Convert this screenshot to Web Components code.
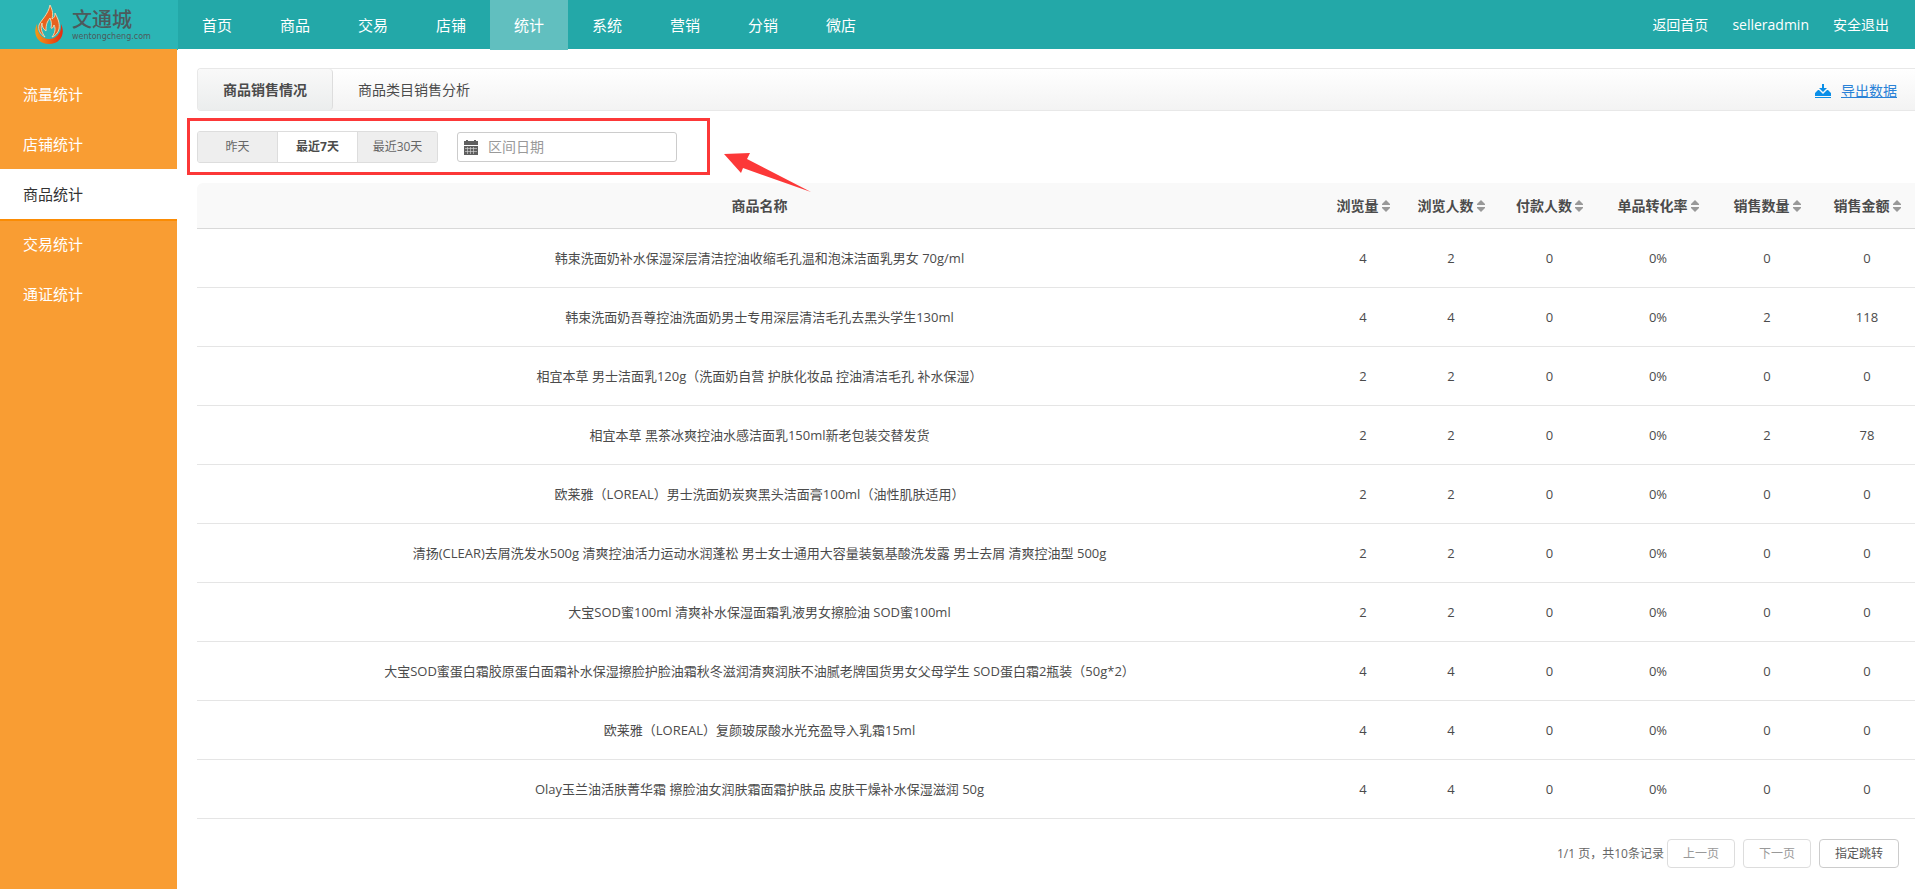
<!DOCTYPE html>
<html lang="zh-CN">
<head>
<meta charset="utf-8">
<title>商品统计</title>
<style>
  body { margin: 0; background: #fff; color: #4b4b4b; font: 14px/20px "Open Sans", "Noto Sans CJK SC", sans-serif; }
</style>
</head>
<body>
<seller-app></seller-app>
<script>
const define = (name, html, setup) => customElements.define(name, class extends HTMLElement {
  constructor() {
    super();
    const t = document.createElement('template');
    t.innerHTML = html;
    this.attachShadow({ mode: 'open' }).append(t.content.cloneNode(true));
    if (setup) setup.call(this, this.shadowRoot);
  }
});

define('brand-logo', `
<style>
  :host { display: flex; align-items: center; gap: 8px; box-sizing: border-box; width: 178px; height: 50px; padding-left: 34px; background: #2bb5b5; color: #4d5a5c; }
  svg { display: block; width: 30px; height: 40px; flex: none; }
  .words { display: flex; flex-direction: column; }
  b { font-weight: 500; font-size: 20px; line-height: 24px; }
  small { font: 8px/10px "DejaVu Sans", sans-serif; white-space: nowrap; }
</style>
<svg viewBox="0 0 30 40" aria-hidden="true">
  <defs><linearGradient id="g" x1="0" x2="1"><stop offset="0" stop-color="#f39a16"/><stop offset="1" stop-color="#e52a12"/></linearGradient></defs>
  <path d="M3 19C-2 29 4 39 15 39S32 29 27 19C28 28 22 34 15 34S3 28 3 19Z" fill="url(#g)"/>
  <path d="M16 0C19 6 19 9 18 14C21 12 21 10 21 8C24 14 26 18 25 24C24 28 21 31 18 32C21 28 22 24 20 20C19 23 18 24 17 23C18 18 17 16 16 13C13 17 12 19 12 26C9 24 8 21 8 18C6 23 8 28 11 32C6 29 4 25 5 20C7 15 14 10 16 0Z" fill="#e8621d" stroke="#f6dcb4" stroke-width=".9"/>
</svg>
<span class="words"><b>文通城</b><small>wentongcheng.com</small></span>`);

define('top-bar', `
<style>
  :host { display: flex; height: 49px; background: #23a8a8; font-size: 15px; }
  nav { display: flex; }
  .main { flex: 1; }
  .main a { width: 78px; height: 50px; line-height: 50px; text-align: center; }
  .main a[aria-current] { background: #61bfbf; }
  .user { gap: 24px; padding-right: 26px; font-size: 14px; line-height: 50px; }
  a { color: #fff; text-decoration: none; }
</style>
<brand-logo></brand-logo>
<nav class="main" aria-label="主导航"><a href="#">首页</a><a href="#">商品</a><a href="#">交易</a><a href="#">店铺</a><a href="#" aria-current="page">统计</a><a href="#">系统</a><a href="#">营销</a><a href="#">分销</a><a href="#">微店</a></nav>
<nav class="user" aria-label="账户"><a href="#">返回首页</a><a href="#">selleradmin</a><a href="#">安全退出</a></nav>`);

define('side-menu', `
<style>
  :host { display: block; width: 177px; flex: none; padding-top: 20px; box-sizing: border-box; background: #f99d33; font-size: 15px; }
  a { display: block; padding-left: 23px; line-height: 50px; color: #fff; text-decoration: none; }
  a[aria-current] { background: #fff; color: #333; box-shadow: 0 2px #fb8c04; }
</style>
<nav aria-label="统计"><a href="#">流量统计</a><a href="#">店铺统计</a><a href="#" aria-current="page">商品统计</a><a href="#">交易统计</a><a href="#">通证统计</a></nav>`);

define('tab-strip', `
<style>
  :host { display: flex; align-items: stretch; height: 41px; border: 1px solid #e8e8e8; border-right: 0; border-radius: 4px 0 0 4px; background: linear-gradient(#fff, #f3f3f3); line-height: 42px; }
  .tab { padding: 0 25px; color: #4b4b4b; text-decoration: none; }
  .tab[aria-current] { border-right: 1px solid #ddd; border-radius: 4px; background: linear-gradient(#f9f9f9, #ebeded); font-weight: bold; }
  .export { display: flex; align-items: center; gap: 10px; margin-left: auto; padding: 2px 18px 0 0; color: #2a82d7; }
  svg { width: 16px; height: 14px; }
</style>
<a class="tab" href="#" aria-current="page">商品销售情况</a><a class="tab" href="#">商品类目销售分析</a>
<a class="export" href="#"><svg viewBox="0 0 16 14" fill="#0a8fe8" aria-hidden="true"><path d="M7 0h2v4h3L8 8 4 4h3zM0 12V9l3-3h1l4 4 4-4h1l3 3v3zM0 13h16v1H0z"/></svg><u>导出数据</u></a>`);

define('date-filter', `
<style>
  :host { display: flex; align-items: center; gap: 19px; position: relative; padding: 20px 0; }
  .seg { display: flex; border: 1px solid #ddd; border-radius: 3px; overflow: hidden; }
  button { width: 80px; height: 30px; padding: 0; border: 0; border-right: 1px solid #ddd; background: #eee; color: #666; font: inherit; font-size: 12px; }
  button:last-child { border-right: 0; width: 79px; }
  button[aria-pressed=true] { background: #fff; color: #4b4b4b; font-weight: bold; }
  label { display: flex; align-items: center; gap: 10px; box-sizing: border-box; width: 220px; height: 30px; padding-left: 6px; border: 1px solid #ccc; border-radius: 3px; background: #fff; }
  label svg { width: 14px; height: 15px; flex: none; }
  input { flex: 1; min-width: 0; padding: 0; border: 0; outline: 0; background: none; font: inherit; }
  input::placeholder { color: #999; opacity: 1; }
  .mark { position: absolute; left: -10px; top: 7px; width: 517px; height: 51px; border: 3px solid #fc3838; pointer-events: none; }
  .arrow { position: absolute; left: 527px; top: 41px; width: 88px; height: 42px; pointer-events: none; }
</style>
<div class="seg" role="group" aria-label="时间范围"><button>昨天</button><button aria-pressed="true">最近7天</button><button>最近30天</button></div>
<label><svg viewBox="0 0 14 15" aria-hidden="true"><path d="M0 1h2V0h2v1h6V0h2v1h2v4H0zM0 6h14v9H0z" fill="#606060"/><path d="M1 8.500h12M1 11.500h12M3.500 7v7M6.500 7v7M9.500 7v7" stroke="#ddd" stroke-width=".6"/></svg><input type="text" placeholder="区间日期" aria-label="区间日期"></label>
<span class="mark"></span>
<svg class="arrow" viewBox="0 0 88 42" aria-hidden="true"><path d="M0 2 26 1 23 7 87 40 19 16 17 21Z" fill="#fc3838"/></svg>`);

define('sort-button', `
<style>
  :host { display: inline-block; }
  button { display: flex; align-items: center; gap: 3px; padding: 0; border: 0; background: none; color: inherit; font: inherit; }
  svg { width: 8px; height: 12px; }
</style>
<button><slot></slot><svg viewBox="0 0 8 12" fill="#999" aria-hidden="true"><path d="M4 0l4 4v1H0V4zM0 7h8v1l-4 4-4-4z"/></svg></button>`);

const rows = [
  ['韩束洗面奶补水保湿深层清洁控油收缩毛孔温和泡沫洁面乳男女 70g/ml', 4, 2, 0, '0%', 0, 0],
  ['韩束洗面奶吾尊控油洗面奶男士专用深层清洁毛孔去黑头学生130ml', 4, 4, 0, '0%', 2, 118],
  ['相宜本草 男士洁面乳120g（洗面奶自营 护肤化妆品 控油清洁毛孔 补水保湿）', 2, 2, 0, '0%', 0, 0],
  ['相宜本草 黑茶冰爽控油水感洁面乳150ml新老包装交替发货', 2, 2, 0, '0%', 2, 78],
  ['欧莱雅（LOREAL）男士洗面奶炭爽黑头洁面膏100ml（油性肌肤适用）', 2, 2, 0, '0%', 0, 0],
  ['清扬(CLEAR)去屑洗发水500g 清爽控油活力运动水润蓬松 男士女士通用大容量装氨基酸洗发露 男士去屑 清爽控油型 500g', 2, 2, 0, '0%', 0, 0],
  ['大宝SOD蜜100ml 清爽补水保湿面霜乳液男女擦脸油 SOD蜜100ml', 2, 2, 0, '0%', 0, 0],
  ['大宝SOD蜜蛋白霜胶原蛋白面霜补水保湿擦脸护脸油霜秋冬滋润清爽润肤不油腻老牌国货男女父母学生 SOD蛋白霜2瓶装（50g*2）', 4, 4, 0, '0%', 0, 0],
  ['欧莱雅（LOREAL）复颜玻尿酸水光充盈导入乳霜15ml', 4, 4, 0, '0%', 0, 0],
  ['Olay玉兰油活肤菁华霜 擦脸油女润肤霜面霜护肤品 皮肤干燥补水保湿滋润 50g', 4, 4, 0, '0%', 0, 0]
];

define('sales-table', `
<style>
  :host { display: block; }
  table { width: 100%; table-layout: fixed; border-collapse: separate; border-spacing: 0; text-align: center; }
  th, td { padding: 0; vertical-align: middle; }
  th { height: 45px; border-bottom: 1px solid #d9d9d9; background: #f9f9f9; color: #4b4b4b; }
  th:first-child { border-radius: 6px 0 0 0; }
  sort-button { vertical-align: middle; }
  td { height: 58px; border-bottom: 1px solid #e5e5e5; font-size: 13px; }
</style>
<table>
  <colgroup><col><col style="width:82px"><col style="width:94px"><col style="width:103px"><col style="width:114px"><col style="width:104px"><col style="width:96px"></colgroup>
  <thead><tr><th scope="col">商品名称</th><th scope="col"><sort-button>浏览量</sort-button></th><th scope="col"><sort-button>浏览人数</sort-button></th><th scope="col"><sort-button>付款人数</sort-button></th><th scope="col"><sort-button>单品转化率</sort-button></th><th scope="col"><sort-button>销售数量</sort-button></th><th scope="col"><sort-button>销售金额</sort-button></th></tr></thead>
  <tbody></tbody>
</table>`, function (root) {
  const body = root.querySelector('tbody');
  for (const row of rows) {
    const tr = body.insertRow();
    for (const value of row) tr.insertCell().textContent = value;
  }
});

define('page-nav', `
<style>
  :host { display: flex; align-items: center; justify-content: flex-end; gap: 8px; padding: 20px 16px 20px 0; font-size: 12px; color: #666; }
  .group { display: flex; align-items: center; gap: 3px; }
  button { box-sizing: border-box; height: 29px; padding: 0 15px; border: 1px solid #ccc; border-radius: 4px; background: #fff; color: #555; font: inherit; }
  button:disabled { border-color: #ddd; color: #999; }
</style>
<span class="group"><span>1/1 页，共10条记录</span><button disabled>上一页</button></span><button disabled>下一页</button><button>指定跳转</button>`);

define('seller-app', `
<style>
  :host { display: flex; flex-direction: column; min-height: 100vh; }
  .body { display: flex; flex: 1; }
  main { flex: 1; min-width: 0; padding: 19px 0 0 20px; }
</style>
<top-bar></top-bar>
<div class="body"><side-menu></side-menu><main><tab-strip></tab-strip><date-filter></date-filter><sales-table></sales-table><page-nav></page-nav></main></div>`);
</script>
</body>
</html>
